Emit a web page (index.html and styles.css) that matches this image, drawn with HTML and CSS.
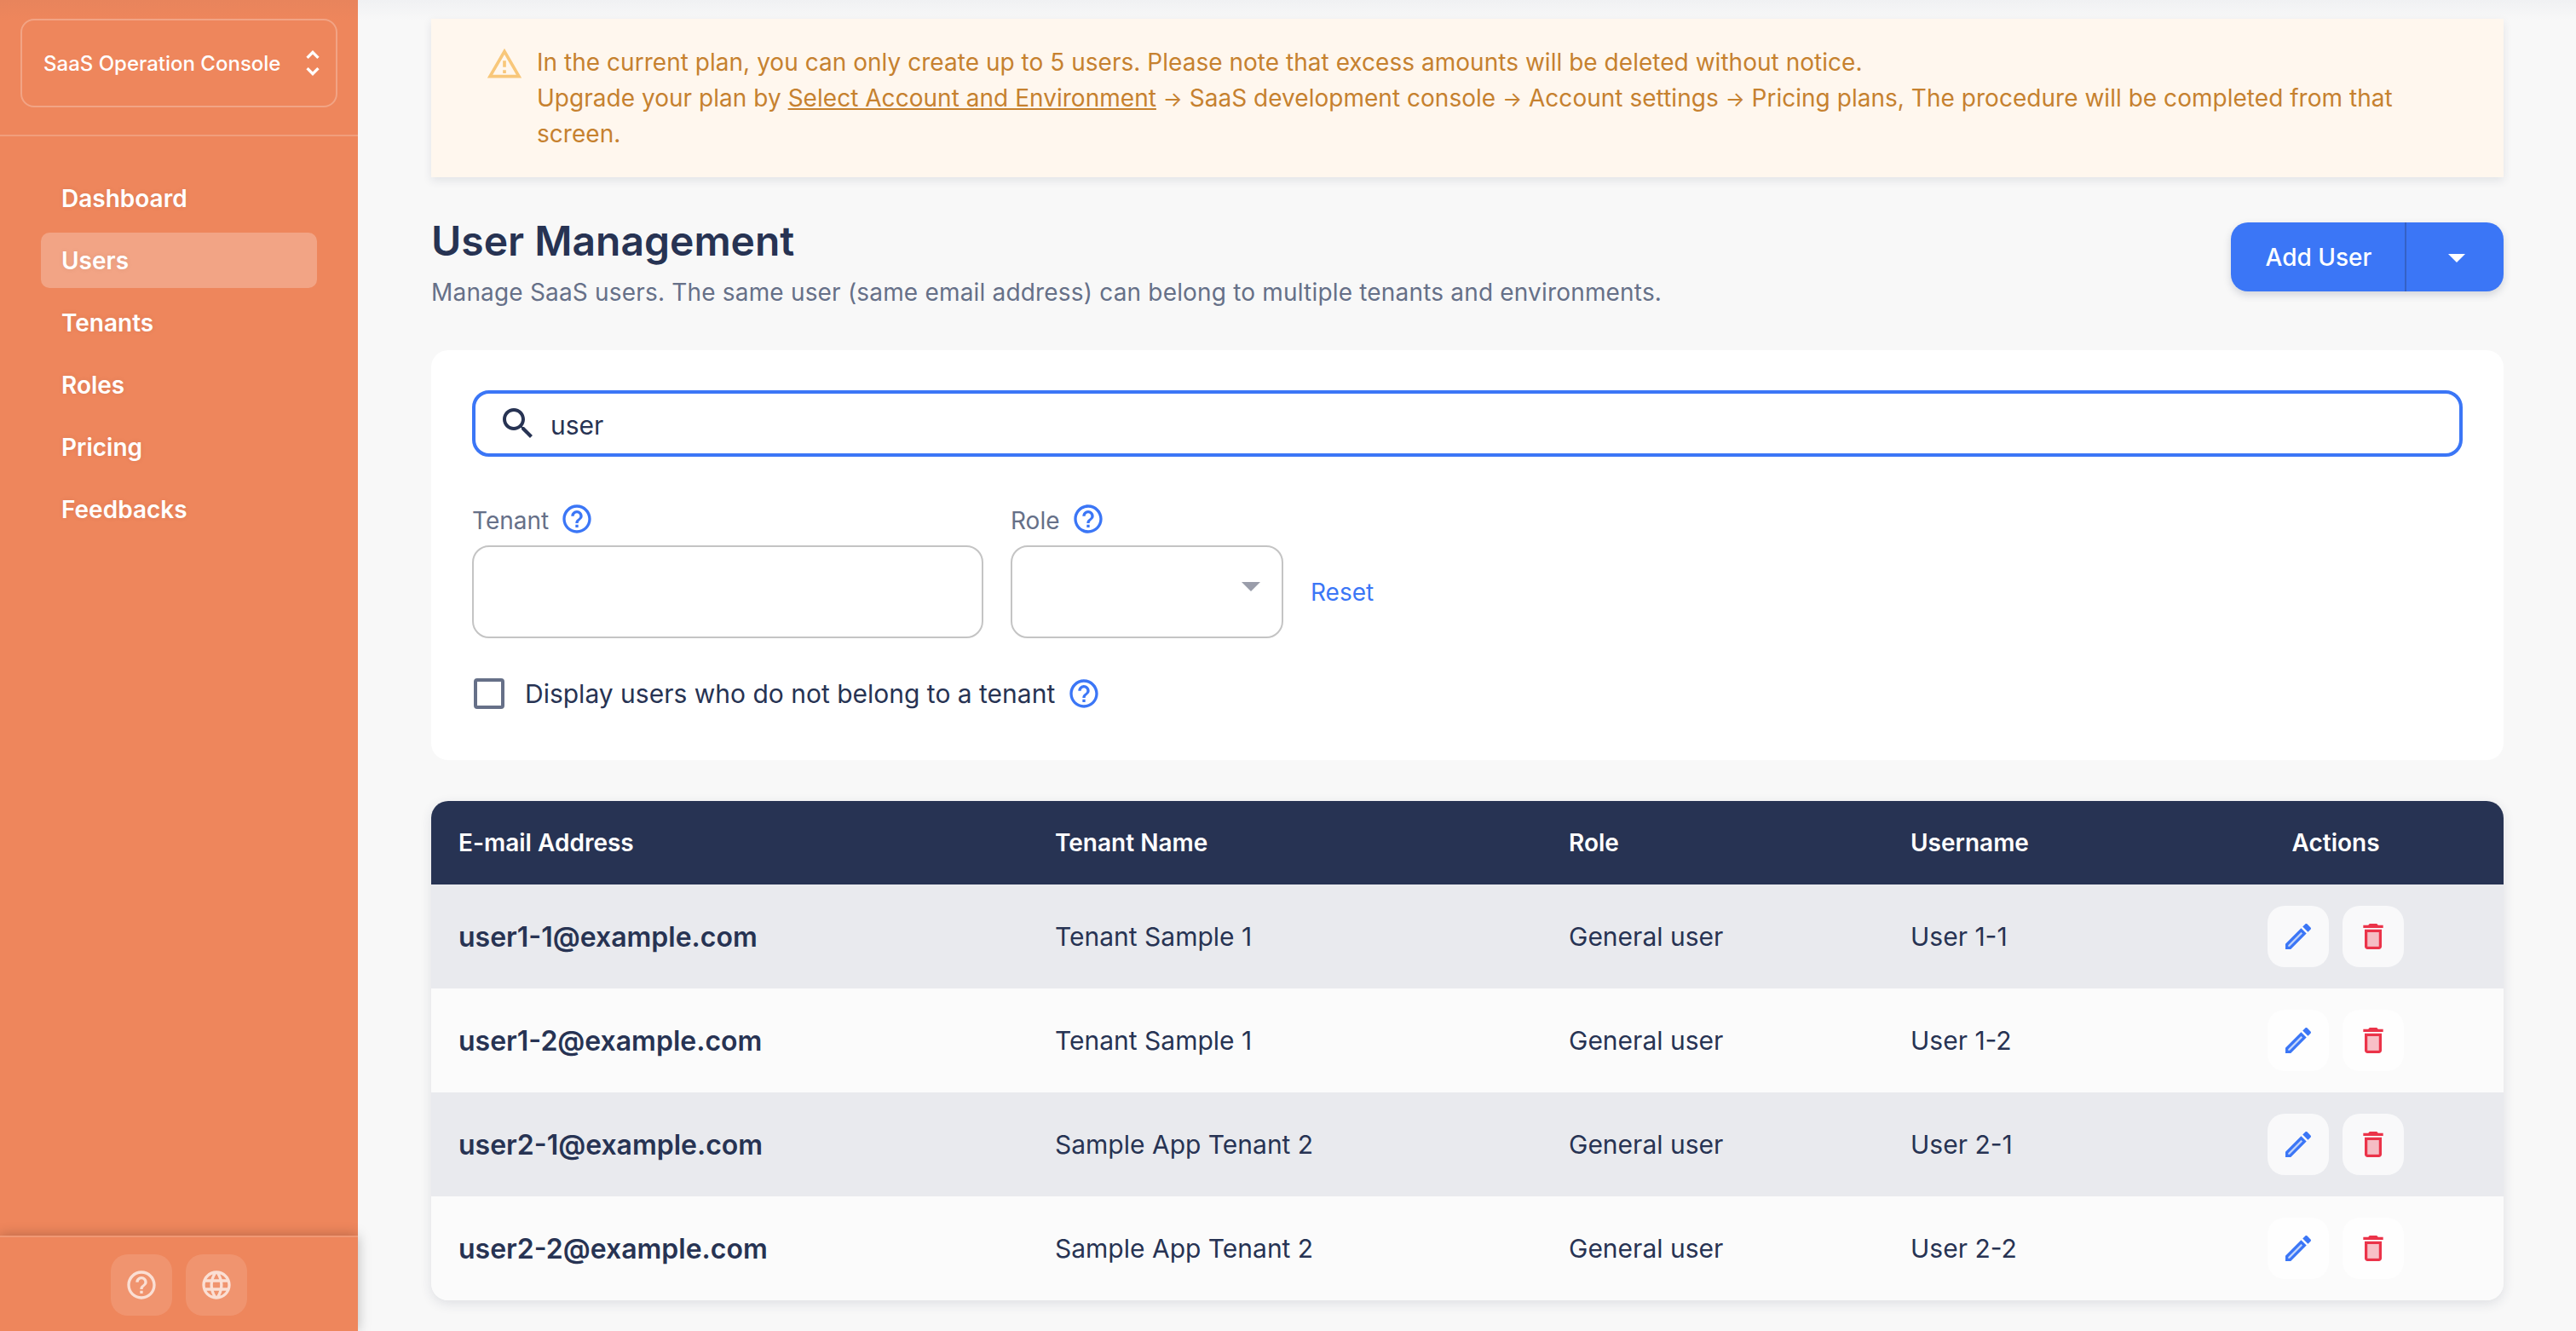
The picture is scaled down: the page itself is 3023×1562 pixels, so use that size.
FILE: index.html
```html
<!DOCTYPE html>
<html lang="en">
  <head>
    <meta charset="UTF-8" />
    <title>User Management</title>
    <link rel="stylesheet" href="styles.css">
  </head>
  <body>
    <svg class="sprite" xmlns="http://www.w3.org/2000/svg">
      <symbol id="i-help" viewBox="0 0 24 24"><path d="M11 18h2v-2h-2v2zm1-16C6.48 2 2 6.48 2 12s4.48 10 10 10 10-4.48 10-10S17.52 2 12 2zm0 18c-4.41 0-8-3.59-8-8s3.59-8 8-8 8 3.59 8 8-3.59 8-8 8zm0-14c-2.21 0-4 1.79-4 4h2c0-1.1.9-2 2-2s2 .9 2 2c0 2-3 1.75-3 5h2c0-2.25 3-2.5 3-5 0-2.21-1.79-4-4-4z"/></symbol>
      <symbol id="i-globe" viewBox="0 0 24 24"><path d="M11.99 2C6.47 2 2 6.48 2 12s4.47 10 9.99 10C17.52 22 22 17.52 22 12S17.52 2 11.99 2zm6.93 6h-2.95c-.32-1.25-.78-2.45-1.38-3.56 1.84.63 3.37 1.91 4.33 3.56zM12 4.04c.83 1.2 1.48 2.53 1.91 3.96h-3.82c.43-1.43 1.08-2.76 1.91-3.96zM4.26 14C4.1 13.36 4 12.69 4 12s.1-1.36.26-2h3.38c-.08.66-.14 1.32-.14 2s.06 1.34.14 2H4.26zm.82 2h2.95c.32 1.25.78 2.45 1.38 3.56-1.84-.63-3.37-1.9-4.33-3.56zm2.95-8H5.08c.96-1.66 2.49-2.93 4.33-3.56C8.81 5.55 8.35 6.75 8.03 8zM12 19.96c-.83-1.2-1.48-2.53-1.91-3.96h3.82c-.43 1.43-1.08 2.76-1.91 3.96zM14.34 14H9.66c-.09-.66-.16-1.32-.16-2s.07-1.35.16-2h4.68c.09.65.16 1.32.16 2s-.07 1.34-.16 2zm.25 5.56c.6-1.11 1.06-2.31 1.38-3.56h2.95c-.96 1.65-2.49 2.93-4.33 3.56zM16.36 14c.08-.66.14-1.32.14-2s-.06-1.34-.14-2h3.38c.16.64.26 1.31.26 2s-.1 1.36-.26 2h-3.38z"/></symbol>
      <symbol id="i-search" viewBox="0 0 24 24"><path d="M15.5 14h-.79l-.28-.27C15.41 12.59 16 11.11 16 9.5 16 5.91 13.09 3 9.5 3S3 5.91 3 9.5 5.91 16 9.5 16c1.61 0 3.09-.59 4.23-1.57l.27.28v.79l5 4.99L20.49 19l-4.99-5zm-6 0C7.01 14 5 11.99 5 9.5S7.01 5 9.5 5 14 7.01 14 9.5 11.99 14 9.5 14z"/></symbol>
      <symbol id="i-warning" viewBox="0 0 24 24"><path d="M12 5.99L19.53 19H4.47L12 5.99M12 2L1 21h22L12 2zm1 14h-2v2h2v-2zm0-6h-2v4h2v-4z"/></symbol>
      <symbol id="i-unfold" viewBox="0 0 24 24"><path d="M12 5.83L15.17 9l1.41-1.41L12 3 7.41 7.59 8.83 9 12 5.83zm0 12.34L8.83 15l-1.41 1.41L12 21l4.59-4.59L15.17 15 12 18.17z"/></symbol>
      <symbol id="i-caret" viewBox="0 0 24 24"><path d="M7 10l5 5 5-5z"/></symbol>
      <symbol id="i-edit" viewBox="0 0 24 24"><path opacity=".3" d="M5 18.08V19h.92l9.06-9.06-.92-.92z"/><path d="M20.71 7.04c.39-.39.39-1.02 0-1.41l-2.34-2.34c-.2-.2-.45-.29-.71-.29s-.51.08-.7.29l-1.83 1.83 3.75 3.75 1.83-1.83zM3 17.25V21h3.75L17.81 9.94l-3.75-3.75L3 17.25zM5.92 19H5v-.92l9.06-9.06.92.92L5.92 19z"/></symbol>
      <symbol id="i-delete" viewBox="0 0 24 24"><path opacity=".3" d="M8 9h8v10H8z"/><path d="M15.5 4l-1-1h-5l-1 1H5v2h14V4zM6 19c0 1.1.9 2 2 2h8c1.1 0 2-.9 2-2V7H6v12zM8 9h8v10H8V9z"/></symbol>
    </svg>

    <div class="app">
      <aside class="sidebar">
        <div class="env-wrap">
          <div class="env-select">
            <span>SaaS Operation Console</span>
            <svg class="env-arrows"><use href="#i-unfold" /></svg>
          </div>
        </div>

        <nav class="side-nav">
          <a class="side-link">Dashboard</a>
          <a class="side-link active">Users</a>
          <a class="side-link">Tenants</a>
          <a class="side-link">Roles</a>
          <a class="side-link">Pricing</a>
          <a class="side-link">Feedbacks</a>
        </nav>

        <div class="side-footer">
          <button class="side-icon"><svg><use href="#i-help" /></svg></button>
          <button class="side-icon"><svg><use href="#i-globe" /></svg></button>
        </div>
      </aside>

      <main class="content">
        <div class="alert">
          <svg class="alert-icon"><use href="#i-warning" /></svg>
          <p>
            In the current plan, you can only create up to 5 users. Please note that excess amounts will be deleted without notice.<br />
            Upgrade your plan by <a class="alert-link">Select Account and Environment</a> <span class="arrow">→</span> SaaS development console <span class="arrow">→</span> Account settings <span class="arrow">→</span> Pricing plans, The procedure will be completed from that<br />
            screen.
          </p>
        </div>

        <div class="page-head">
          <div>
            <h1>User Management</h1>
            <p class="page-sub">Manage SaaS users. The same user (same email address) can belong to multiple tenants and environments.</p>
          </div>
          <div class="split-button">
            <button class="split-main">Add User</button>
            <button class="split-caret"><svg><use href="#i-caret" /></svg></button>
          </div>
        </div>

        <section class="filter-card">
          <div class="search-box">
            <svg><use href="#i-search" /></svg>
            <input type="text" value="user" />
          </div>

          <div class="filter-grid">
            <label class="field-label">Tenant <svg class="help"><use href="#i-help" /></svg></label>
            <label class="field-label">Role <svg class="help"><use href="#i-help" /></svg></label>
            <span></span>
            <input class="field-input" type="text" />
            <div class="field-input role-select"><i class="role-arrow"></i></div>
            <a class="reset-link">Reset</a>
          </div>

          <div class="check-row">
            <span class="check-box"></span>
            <span>Display users who do not belong to a tenant</span>
            <svg class="help"><use href="#i-help" /></svg>
          </div>
        </section>

        <div class="table-wrap">
          <table class="user-table">
            <thead>
              <tr>
                <th class="col-email">E-mail Address</th>
                <th class="col-tenant">Tenant Name</th>
                <th class="col-role">Role</th>
                <th class="col-name">Username</th>
                <th class="col-actions">Actions</th>
              </tr>
            </thead>
            <tbody>
              <tr>
                <td class="email">user1-1@example.com</td>
                <td>Tenant Sample 1</td>
                <td>General user</td>
                <td>User 1-1</td>
                <td>
                  <div class="actions">
                    <button class="act-btn edit"><svg><use href="#i-edit" /></svg></button>
                    <button class="act-btn remove"><svg><use href="#i-delete" /></svg></button>
                  </div>
                </td>
              </tr>
              <tr>
                <td class="email">user1-2@example.com</td>
                <td>Tenant Sample 1</td>
                <td>General user</td>
                <td>User 1-2</td>
                <td>
                  <div class="actions">
                    <button class="act-btn edit"><svg><use href="#i-edit" /></svg></button>
                    <button class="act-btn remove"><svg><use href="#i-delete" /></svg></button>
                  </div>
                </td>
              </tr>
              <tr>
                <td class="email">user2-1@example.com</td>
                <td>Sample App Tenant 2</td>
                <td>General user</td>
                <td>User 2-1</td>
                <td>
                  <div class="actions">
                    <button class="act-btn edit"><svg><use href="#i-edit" /></svg></button>
                    <button class="act-btn remove"><svg><use href="#i-delete" /></svg></button>
                  </div>
                </td>
              </tr>
              <tr>
                <td class="email">user2-2@example.com</td>
                <td>Sample App Tenant 2</td>
                <td>General user</td>
                <td>User 2-2</td>
                <td>
                  <div class="actions">
                    <button class="act-btn edit"><svg><use href="#i-edit" /></svg></button>
                    <button class="act-btn remove"><svg><use href="#i-delete" /></svg></button>
                  </div>
                </td>
              </tr>
            </tbody>
          </table>
        </div>
      </main>
    </div>
  </body>
</html>
```

FILE: styles.css
```css
* {
  box-sizing: border-box;
}

body {
  margin: 0;
  font-family: Inter, "Noto Sans", sans-serif;
  color: #273353;
  background-color: #f8f8f8;
}

button,
input {
  font-family: inherit;
}

.sprite {
  display: none;
}

.app {
  display: grid;
  grid-template-columns: 420px 1fr;
  height: 1562px;
  overflow: hidden;
}

/* sidebar */

.sidebar {
  display: flex;
  flex-direction: column;
  background: linear-gradient(#e8845c, #ee865c 24px);
  color: #fff;
}

.env-wrap {
  padding: 22px 24px 32px;
  border-bottom: 2px solid rgb(255 255 255 / 20%);
}

.env-select {
  display: flex;
  align-items: center;
  justify-content: space-between;
  height: 104px;
  padding: 0 7px 0 25px;
  border: 2px solid rgb(255 255 255 / 25%);
  border-radius: 16px;
  font-size: 24px;
  font-weight: 500;
}

.env-arrows {
  width: 40px;
  height: 40px;
  fill: #fff;
}

.side-nav {
  display: flex;
  flex-direction: column;
  gap: 8px;
  padding: 40px 48px 0;
}

.side-link {
  display: flex;
  align-items: center;
  height: 65px;
  padding-left: 24px;
  border-radius: 10px;
  font-size: 28px;
  font-weight: 600;
  text-shadow: 0 0 6px rgb(0 0 0 / 8%);
}

.side-link.active {
  background-color: rgb(255 255 255 / 25%);
}

.side-footer {
  display: flex;
  justify-content: center;
  gap: 16px;
  margin-top: auto;
  height: 112px;
  padding-top: 20px;
  border-top: 2px solid rgb(255 255 255 / 15%);
  background-color: #ee865c;
  box-shadow: 0 0 14px rgb(0 0 0 / 25%);
  position: relative;
  z-index: 2;
}

.side-icon {
  display: flex;
  align-items: center;
  justify-content: center;
  width: 72px;
  height: 72px;
  padding: 0;
  border: 0;
  border-radius: 20px;
  background-color: rgb(255 255 255 / 12%);
}

.side-icon svg {
  width: 40px;
  height: 40px;
  fill: rgb(255 255 255 / 70%);
}

/* main column */

.content {
  padding: 22px 85px 0 86px;
  background: linear-gradient(#f0f1f3, #f8f8f8 24px);
}

.alert {
  display: flex;
  align-items: flex-start;
  gap: 16px;
  padding: 30px 50px 30px 66px;
  background-color: #fff7ee;
  color: #c6812f;
  font-size: 28px;
  line-height: 42px;
  letter-spacing: 0.03px;
  box-shadow: 0 4px 10px rgb(39 51 83 / 10%);
}

.alert p {
  margin: 0;
}

.alert-icon {
  flex: none;
  width: 44px;
  height: 44px;
  margin-top: 1px;
  margin-left: -2px;
  fill: #f8c77a;
}

.alert-link {
  text-decoration: underline;
}

.arrow {
  font-size: 24px;
  line-height: 0;
}

.page-head {
  display: flex;
  justify-content: space-between;
  align-items: flex-start;
  margin-top: 40px;
}

.page-head h1 {
  margin: 2px 0 0;
  font-size: 48px;
  line-height: 66px;
  font-weight: 600;
}

.page-sub {
  margin: 6px 0 0;
  font-size: 28px;
  line-height: 42px;
  letter-spacing: 0.18px;
  color: #667088;
}

.split-button {
  display: flex;
  margin-top: 13px;
  height: 81px;
  border-radius: 20px;
  background-color: #3b76f6;
  box-shadow: 0 4px 10px rgb(39 51 83 / 18%);
}

.split-button button {
  border: 0;
  background: none;
  color: #fff;
  padding: 0;
}

.split-main {
  width: 206px;
  padding-left: 2px !important;
  font-size: 28px;
  font-weight: 500;
  border-right: 2px solid rgb(39 51 83 / 30%) !important;
}

.split-caret {
  display: flex;
  align-items: center;
  justify-content: center;
  width: 114px;
  padding-left: 3px !important;
}

.split-caret svg {
  width: 48px;
  height: 48px;
  fill: #fff;
}

/* filters */

.filter-card {
  margin-top: 47px;
  padding: 47px 48px 60px;
  background-color: #fff;
  border-radius: 20px;
}

.search-box {
  display: flex;
  align-items: center;
  gap: 14px;
  height: 78px;
  padding-left: 26px;
  border: 4px solid #3b76f6;
  border-radius: 20px;
}

.search-box svg {
  width: 48px;
  height: 48px;
  fill: #273353;
  flex: none;
}

.search-box input {
  flex: 1;
  border: 0;
  outline: 0;
  padding: 3px 0 0;
  font-size: 30px;
  color: #273353;
}

.filter-grid {
  display: grid;
  grid-template-columns: 600px 320px auto;
  column-gap: 32px;
  row-gap: 13px;
  margin-top: 55px;
}

.field-label {
  display: flex;
  align-items: center;
  gap: 13px;
  height: 36px;
  padding-top: 4px;
  font-size: 28px;
  color: #667088;
}

.help {
  width: 40px;
  height: 40px;
  fill: #3b76f6;
  flex: none;
}

.field-label .help {
  margin-top: -4px;
}

.field-input {
  height: 109px;
  padding: 0;
  border: 2px solid #c4c4c4;
  border-radius: 20px;
  background-color: #fff;
  outline: 0;
}

.role-select {
  display: flex;
  justify-content: flex-end;
  align-items: center;
  padding-right: 25px;
  padding-bottom: 12px;
}

.role-arrow {
  width: 0;
  height: 0;
  border-left: 11px solid transparent;
  border-right: 11px solid transparent;
  border-top: 11px solid #9a9daa;
}

.reset-link {
  align-self: center;
  font-size: 28px;
  color: #3b76f6;
}

.check-row {
  display: flex;
  align-items: center;
  margin-top: 47px;
  font-size: 30px;
  height: 36px;
}

.check-box {
  width: 36px;
  height: 36px;
  margin-left: 2px;
  margin-right: 24px;
  border: 4px solid #667088;
  border-radius: 4px;
}

.check-row .help {
  margin-left: 14px;
}

/* table */

.table-wrap {
  margin-top: 48px;
  border-radius: 20px;
  overflow: hidden;
  box-shadow: 0 4px 14px rgb(39 51 83 / 12%);
}

.user-table {
  width: 100%;
  table-layout: fixed;
  border-collapse: collapse;
}

.user-table th {
  height: 98px;
  padding: 0 0 0 32px;
  background-color: #273353;
  color: #fff;
  font-size: 28px;
  font-weight: 600;
  text-align: left;
}

.col-email { width: 700px; }
.col-tenant { width: 603px; }
.col-role { width: 401px; }
.col-name { width: 334px; }

.user-table th.col-actions {
  padding: 0;
  text-align: center;
}

.user-table td {
  height: 122px;
  padding: 0 0 0 32px;
  font-size: 30px;
}

.user-table tbody tr:nth-child(odd) {
  background-color: #e9eaee;
}

.user-table tbody tr:nth-child(even) {
  background-color: #fbfbfb;
}

.user-table td.email {
  font-size: 32px;
  font-weight: 600;
}

.actions {
  display: flex;
  gap: 16px;
  margin-left: 85px;
}

.act-btn {
  display: flex;
  align-items: center;
  justify-content: center;
  width: 72px;
  height: 72px;
  padding: 0;
  border: 0;
  border-radius: 20px;
  background-color: rgb(255 255 255 / 70%);
}

.act-btn svg {
  width: 40px;
  height: 40px;
}

.act-btn.edit svg {
  fill: #3b76f6;
}

.act-btn.remove svg {
  fill: #eb3349;
}
```
